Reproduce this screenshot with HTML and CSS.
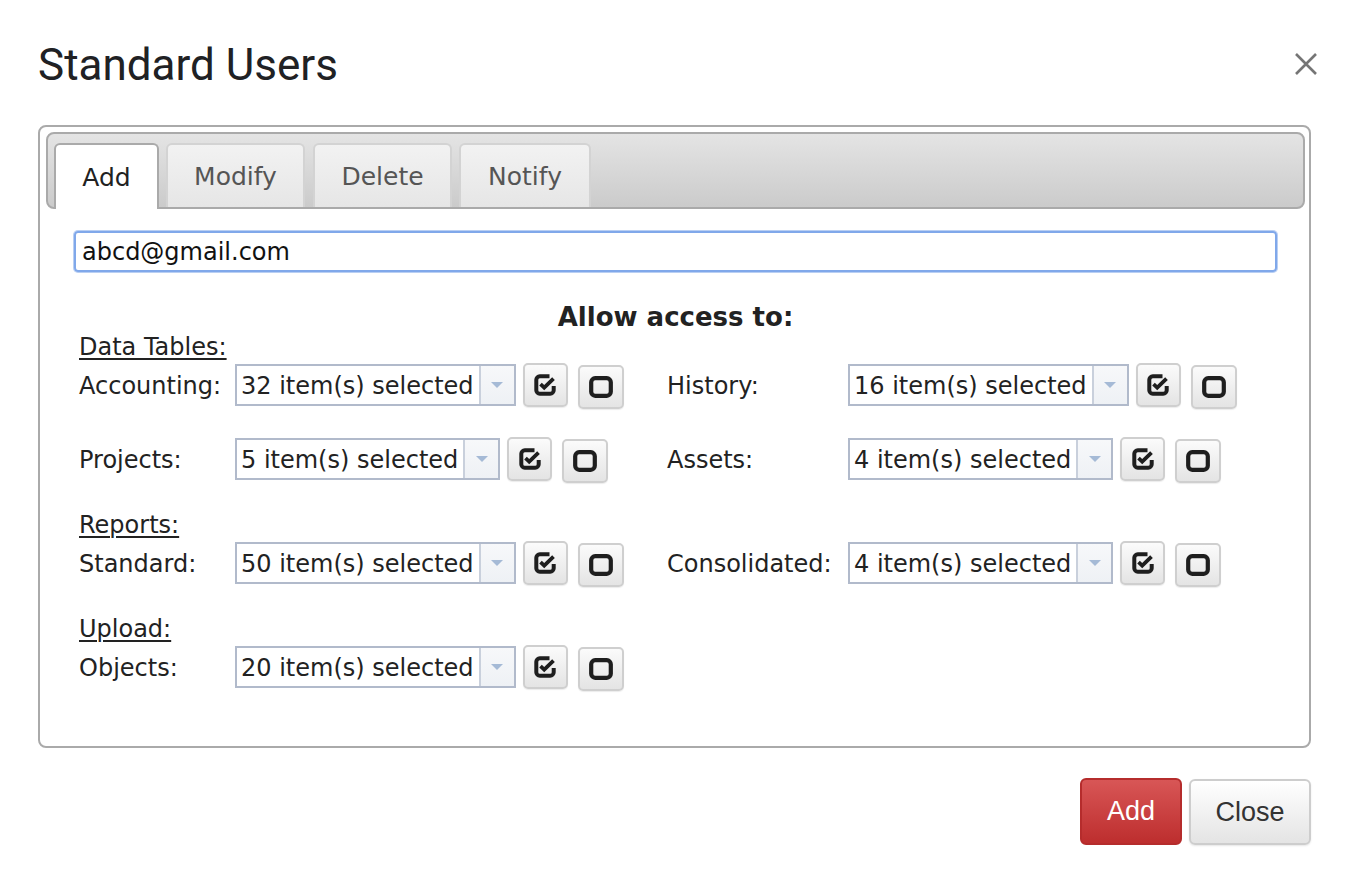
FILE: index.html
```html
<!DOCTYPE html>
<html>
<head>
<meta charset="utf-8">
<link rel="stylesheet" href="styles.css">
</head>
<body>
<div class="dialog">
  <div class="dlg-head">
    <h1 class="title">Standard Users</h1>
    <svg class="x-icon" width="24" height="24" viewBox="0 0 24 24"><path d="M2 2 L22 22 M22 2 L2 22" stroke="#757575" stroke-width="2.6" fill="none"/></svg>
  </div>
  <div class="dlg-body">
    <div class="tabs">
      <div class="tabbar">
        <div class="tab active">Add</div>
        <div class="tab">Modify</div>
        <div class="tab">Delete</div>
        <div class="tab">Notify</div>
      </div>
      <div class="panel">
        <div class="email">abcd@gmail.com</div>
        <div class="allow">Allow access to:</div>

        <div class="section">
          <div class="sec-head"><u>Data Tables:</u></div>
          <div class="grid">
            <div class="lbl">Accounting:</div>
            <div class="ctl"><div class="sel"><span class="sel-text">32 item(s) selected</span><span class="sel-arrow"><i class="tri"></i></span></div><button class="ib"><svg width="22" height="22" viewBox="0 0 22 22"><path d="M15.5 2.3 H5.8 A3.5 3.5 0 0 0 2.3 5.8 V16.2 A3.5 3.5 0 0 0 5.8 19.7 H16.2 A3.5 3.5 0 0 0 19.7 16.2 V12" fill="none" stroke="#1e1e1e" stroke-width="4"/><path d="M6.5 10.2 L10.2 13.6 L19.5 4.6" fill="none" stroke="#1e1e1e" stroke-width="3.8"/></svg></button><button class="ib low"><svg width="24" height="22" viewBox="0 0 24 22"><rect x="2.2" y="2.2" width="19.6" height="17.6" rx="4" fill="none" stroke="#1e1e1e" stroke-width="4.2"/></svg></button></div>
            <div class="lbl">History:</div>
            <div class="ctl"><div class="sel"><span class="sel-text">16 item(s) selected</span><span class="sel-arrow"><i class="tri"></i></span></div><button class="ib"><svg width="22" height="22" viewBox="0 0 22 22"><path d="M15.5 2.3 H5.8 A3.5 3.5 0 0 0 2.3 5.8 V16.2 A3.5 3.5 0 0 0 5.8 19.7 H16.2 A3.5 3.5 0 0 0 19.7 16.2 V12" fill="none" stroke="#1e1e1e" stroke-width="4"/><path d="M6.5 10.2 L10.2 13.6 L19.5 4.6" fill="none" stroke="#1e1e1e" stroke-width="3.8"/></svg></button><button class="ib low"><svg width="24" height="22" viewBox="0 0 24 22"><rect x="2.2" y="2.2" width="19.6" height="17.6" rx="4" fill="none" stroke="#1e1e1e" stroke-width="4.2"/></svg></button></div>

            <div class="lbl">Projects:</div>
            <div class="ctl"><div class="sel"><span class="sel-text">5 item(s) selected</span><span class="sel-arrow"><i class="tri"></i></span></div><button class="ib"><svg width="22" height="22" viewBox="0 0 22 22"><path d="M15.5 2.3 H5.8 A3.5 3.5 0 0 0 2.3 5.8 V16.2 A3.5 3.5 0 0 0 5.8 19.7 H16.2 A3.5 3.5 0 0 0 19.7 16.2 V12" fill="none" stroke="#1e1e1e" stroke-width="4"/><path d="M6.5 10.2 L10.2 13.6 L19.5 4.6" fill="none" stroke="#1e1e1e" stroke-width="3.8"/></svg></button><button class="ib low"><svg width="24" height="22" viewBox="0 0 24 22"><rect x="2.2" y="2.2" width="19.6" height="17.6" rx="4" fill="none" stroke="#1e1e1e" stroke-width="4.2"/></svg></button></div>
            <div class="lbl">Assets:</div>
            <div class="ctl"><div class="sel"><span class="sel-text">4 item(s) selected</span><span class="sel-arrow"><i class="tri"></i></span></div><button class="ib"><svg width="22" height="22" viewBox="0 0 22 22"><path d="M15.5 2.3 H5.8 A3.5 3.5 0 0 0 2.3 5.8 V16.2 A3.5 3.5 0 0 0 5.8 19.7 H16.2 A3.5 3.5 0 0 0 19.7 16.2 V12" fill="none" stroke="#1e1e1e" stroke-width="4"/><path d="M6.5 10.2 L10.2 13.6 L19.5 4.6" fill="none" stroke="#1e1e1e" stroke-width="3.8"/></svg></button><button class="ib low"><svg width="24" height="22" viewBox="0 0 24 22"><rect x="2.2" y="2.2" width="19.6" height="17.6" rx="4" fill="none" stroke="#1e1e1e" stroke-width="4.2"/></svg></button></div>
          </div>
        </div>

        <div class="section">
          <div class="sec-head"><u>Reports:</u></div>
          <div class="grid">
            <div class="lbl">Standard:</div>
            <div class="ctl"><div class="sel"><span class="sel-text">50 item(s) selected</span><span class="sel-arrow"><i class="tri"></i></span></div><button class="ib"><svg width="22" height="22" viewBox="0 0 22 22"><path d="M15.5 2.3 H5.8 A3.5 3.5 0 0 0 2.3 5.8 V16.2 A3.5 3.5 0 0 0 5.8 19.7 H16.2 A3.5 3.5 0 0 0 19.7 16.2 V12" fill="none" stroke="#1e1e1e" stroke-width="4"/><path d="M6.5 10.2 L10.2 13.6 L19.5 4.6" fill="none" stroke="#1e1e1e" stroke-width="3.8"/></svg></button><button class="ib low"><svg width="24" height="22" viewBox="0 0 24 22"><rect x="2.2" y="2.2" width="19.6" height="17.6" rx="4" fill="none" stroke="#1e1e1e" stroke-width="4.2"/></svg></button></div>
            <div class="lbl">Consolidated:</div>
            <div class="ctl"><div class="sel"><span class="sel-text">4 item(s) selected</span><span class="sel-arrow"><i class="tri"></i></span></div><button class="ib"><svg width="22" height="22" viewBox="0 0 22 22"><path d="M15.5 2.3 H5.8 A3.5 3.5 0 0 0 2.3 5.8 V16.2 A3.5 3.5 0 0 0 5.8 19.7 H16.2 A3.5 3.5 0 0 0 19.7 16.2 V12" fill="none" stroke="#1e1e1e" stroke-width="4"/><path d="M6.5 10.2 L10.2 13.6 L19.5 4.6" fill="none" stroke="#1e1e1e" stroke-width="3.8"/></svg></button><button class="ib low"><svg width="24" height="22" viewBox="0 0 24 22"><rect x="2.2" y="2.2" width="19.6" height="17.6" rx="4" fill="none" stroke="#1e1e1e" stroke-width="4.2"/></svg></button></div>
          </div>
        </div>

        <div class="section">
          <div class="sec-head"><u>Upload:</u></div>
          <div class="grid">
            <div class="lbl">Objects:</div>
            <div class="ctl"><div class="sel"><span class="sel-text">20 item(s) selected</span><span class="sel-arrow"><i class="tri"></i></span></div><button class="ib"><svg width="22" height="22" viewBox="0 0 22 22"><path d="M15.5 2.3 H5.8 A3.5 3.5 0 0 0 2.3 5.8 V16.2 A3.5 3.5 0 0 0 5.8 19.7 H16.2 A3.5 3.5 0 0 0 19.7 16.2 V12" fill="none" stroke="#1e1e1e" stroke-width="4"/><path d="M6.5 10.2 L10.2 13.6 L19.5 4.6" fill="none" stroke="#1e1e1e" stroke-width="3.8"/></svg></button><button class="ib low"><svg width="24" height="22" viewBox="0 0 24 22"><rect x="2.2" y="2.2" width="19.6" height="17.6" rx="4" fill="none" stroke="#1e1e1e" stroke-width="4.2"/></svg></button></div>
          </div>
        </div>
      </div>
    </div>
    <div class="footer">
      <button class="btn btn-red">Add</button>
      <button class="btn btn-gray">Close</button>
    </div>
  </div>
</div>
</body>
</html>
```

FILE: styles.css
```css
html, body {
  margin: 0;
  padding: 0;
  background: #fff;
}
.dialog {
  width: 1354px;
  height: 876px;
  box-sizing: border-box;
}
.dlg-head {
  display: flex;
  justify-content: space-between;
  align-items: flex-start;
  padding: 39px 36px 0 38px;
}
.title {
  margin: 0;
  font-family: Roboto, "Liberation Sans", sans-serif;
  font-weight: 400;
  font-size: 44px;
  line-height: 52px;
  color: #202124;
}
.x-icon {
  margin-top: 13px;
}
.dlg-body {
  padding: 34px 43px 0 38px;
}
.tabs {
  border: 2px solid #aaa;
  border-radius: 8px;
  padding: 5px 4px 0 6px;
  background: #fff;
  font-family: "DejaVu Sans", Verdana, sans-serif;
}
.tabbar {
  display: flex;
  align-items: flex-end;
  gap: 7px;
  height: 64px;
  padding: 9px 6px 0 6px;
  border: 2px solid #aaa;
  border-radius: 8px;
  background: linear-gradient(#e4e4e4, #cbcbcb);
}
.tab {
  height: 64px;
  box-sizing: border-box;
  padding: 0;
  text-align: center;
  border: 2px solid #d3d3d3;
  border-bottom: none;
  border-radius: 6px 6px 0 0;
  background: linear-gradient(#f2f2f2, #e6e6e6);
  color: #555;
  font-size: 25px;
  line-height: 64px;
}
.tab:nth-child(2), .tab:nth-child(3) {
  width: 139px;
}
.tab:nth-child(3) {
  margin-left: 1px;
}
.tab:nth-child(4) {
  width: 132px;
}
.tab.active {
  width: 105px;
  height: 66px;
  line-height: 66px;
  margin-bottom: -2px;
  background: #fff;
  border-color: #aaa;
  color: #212121;
  position: relative;
}
.panel {
  padding: 22px 28px 55px 28px;
  color: #222;
  font-size: 24px;
}
.email {
  height: 41px;
  box-sizing: border-box;
  border: 2px solid #80a8ea;
  box-shadow: 0 0 0 1px rgba(128, 168, 234, 0.55);
  border-radius: 4px;
  padding: 0 6px;
  line-height: 39px;
  color: #111;
  font-size: 24px;
}
.allow {
  margin-top: 30px;
  height: 30px;
  line-height: 30px;
  text-align: center;
  font-weight: bold;
  font-size: 26px;
  color: #222;
}
.section + .section {
  margin-top: 27px;
}
.sec-head {
  height: 30px;
  line-height: 30px;
  padding-left: 5px;
}
.sec-head u {
  text-decoration-thickness: 2px;
  text-underline-offset: 3px;
}
.grid {
  margin-top: 1px;
  display: grid;
  grid-template-columns: 156px 432px 181px 1fr;
  row-gap: 28px;
  align-items: center;
  padding-left: 5px;
}
.lbl {
  line-height: 30px;
}
.ctl {
  display: flex;
  align-items: flex-start;
  height: 46px;
}
.sel {
  display: flex;
  height: 42px;
  margin-top: 1px;
  box-sizing: border-box;
  border: 2px solid #b1bacb;
  background: #fff;
  margin-right: 7px;
}
.sel-text {
  padding: 0 5px 0 4px;
  line-height: 40px;
  color: #222;
}
.sel-arrow {
  width: 33px;
  border-left: 2px solid #c9d0dc;
  background: linear-gradient(#f7f8fa, #eef1f5);
  display: flex;
  align-items: center;
  justify-content: center;
}
.tri {
  display: block;
  width: 0;
  height: 0;
  border-left: 6px solid transparent;
  border-right: 6px solid transparent;
  border-top: 6px solid #a5bad6;
}
.ib {
  width: 45px;
  height: 44px;
  box-sizing: border-box;
  border: 2px solid #cfcfcf;
  border-radius: 5px;
  background: linear-gradient(#fbfbfb, #e4e4e4);
  box-shadow: 0 1px 1px rgba(0,0,0,0.08);
  padding: 0;
  display: flex;
  align-items: center;
  justify-content: center;
  margin-right: 10px;
}
.ib svg {
  flex: none;
}
.ib.low {
  margin-top: 2px;
  width: 46px;
}
.footer {
  display: flex;
  justify-content: flex-end;
  align-items: flex-start;
  gap: 7px;
  margin-top: 30px;
}
.btn {
  font-family: "Liberation Sans", Arial, sans-serif;
  font-size: 27px;
  box-sizing: border-box;
  border-radius: 6px;
  padding: 0;
}
.btn-red {
  width: 102px;
  height: 67px;
  color: #fff;
  border: 2px solid #b52c2c;
  background: linear-gradient(#d85656, #bd2e2e);
}
.btn-gray {
  width: 122px;
  height: 66px;
  margin-top: 1px;
  color: #333;
  border: 2px solid #cdcdcd;
  background: linear-gradient(#ffffff, #e4e4e4);
  box-shadow: 0 1px 2px rgba(0,0,0,0.1);
}
```
